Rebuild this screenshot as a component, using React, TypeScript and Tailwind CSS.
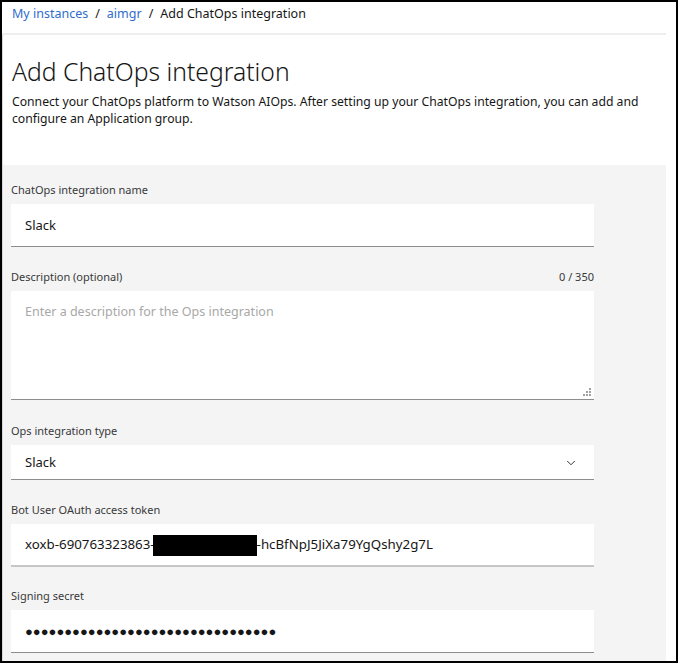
import { ChevronDown } from 'lucide-react';

const font = { fontFamily: '"Noto Sans", "Open Sans", Arial, sans-serif' };

// 字段标签
const Label = ({ children, right }: { children: string; right?: string }) => (
  <div className="flex justify-between items-end w-[583px] h-[14px] mb-[7px] text-[11px] leading-[14px] text-[#393939]">
    <span>{children}</span>
    {right && <span>{right}</span>}
  </div>
);

export default function App() {
  return (
    <div className="w-[679px] h-[664px] bg-white overflow-hidden" style={font}>
      <div className="w-[678px] h-[663px] border-2 border-black flex flex-col">
        {/* 面包屑 */}
        <div className="w-[664px] h-[33px] border-b-2 border-[#eeeeee] pl-[10px] pt-[3px] text-[12.5px] leading-[18px] flex items-start gap-[7px]">
          <span className="text-[#2f6ccc]">My instances</span>
          <span className="text-[#161616]">/</span>
          <span className="text-[#2f6ccc]">aimgr</span>
          <span className="text-[#161616]">/</span>
          <span className="text-[#161616]">Add ChatOps integration</span>
        </div>

        <div className="w-[664px] flex-1 border-l border-[#d8d8d8] flex flex-col">
          {/* 标题 */}
          <div className="pl-[9px] pt-[20px] pr-[10px]">
            <h1 className="text-[24.7px] leading-[34px] font-light text-[#161616]">Add ChatOps integration</h1>
            <p className="mt-[4px] text-[12.2px] leading-[17px] text-[#161616]">
              Connect your ChatOps platform to Watson AIOps. After setting up your ChatOps integration, you can add and
              configure an Application group.
            </p>
          </div>

          {/* 表单区域 */}
          <div className="mt-[38px] flex-1 bg-[#f4f4f4] pl-[8px] pt-[18px]">
            <Label>ChatOps integration name</Label>
            <div className="w-[583px] h-[43px] bg-white border-b border-[#8d8d8d] flex items-center px-[14px] pt-[2px] text-[13px] text-[#161616]">
              Slack
            </div>

            <div className="mt-[23px]">
              <Label right="0 / 350">Description (optional)</Label>
            </div>
            <div className="relative w-[583px] h-[109px] bg-white border-b border-[#8d8d8d] px-[14px] pt-[12px] text-[12.5px] text-[#a8a8a8]">
              Enter a description for the Ops integration
              <svg className="absolute right-[2px] bottom-[2px]" width="10" height="10" viewBox="0 0 10 10">
                <g fill="#a0a0a0">
                  <rect x="7" y="1" width="2" height="2" />
                  <rect x="7" y="4" width="2" height="2" />
                  <rect x="4" y="4" width="2" height="2" />
                  <rect x="7" y="7" width="2" height="2" />
                  <rect x="4" y="7" width="2" height="2" />
                  <rect x="1" y="7" width="2" height="2" />
                </g>
              </svg>
            </div>

            <div className="mt-[24px]">
              <Label>Ops integration type</Label>
            </div>
            <div className="w-[583px] h-[35px] bg-white border-b border-[#8d8d8d] flex items-center justify-between pl-[14px] pr-[16px] pt-[1px] text-[13px] text-[#161616]">
              <span>Slack</span>
              <ChevronDown size={14} strokeWidth={1.5} className="text-[#161616]" />
            </div>

            <div className="mt-[23px]">
              <Label>Bot User OAuth access token</Label>
            </div>
            <div className="w-[583px] h-[43px] bg-white border-b-2 border-[#c6c6c6] flex items-center px-[14px] pt-[1px] text-[13.3px] text-[#161616]">
              <span>xoxb-690763323863-</span>
              <span className="inline-block w-[104px] h-[21px] bg-black -ml-[2px]" />
              <span>-hcBfNpJ5JiXa79YgQshy2g7L</span>
            </div>

            <div className="mt-[22px]">
              <Label>Signing secret</Label>
            </div>
            <div className="w-[583px] h-[43px] bg-white border-b border-[#8d8d8d] flex items-center px-[14px] pt-[1px] text-[13px] text-[#161616]">
              {'●'.repeat(32)}
            </div>
          </div>
        </div>
      </div>
    </div>
  );
}
